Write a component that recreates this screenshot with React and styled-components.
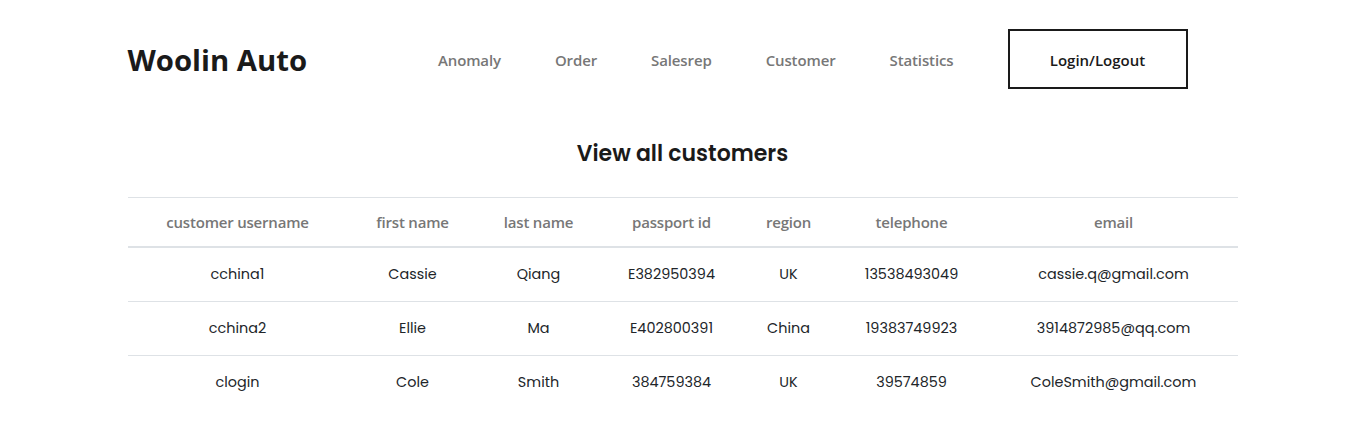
import React from "react";
import styled, { createGlobalStyle } from "styled-components";

const Global = createGlobalStyle`
  html, body { margin: 0; padding: 0; background: #fff; }
  body { font-family: "Open Sans", "Noto Sans", sans-serif; }
`;

const Container = styled.div`
  max-width: 1140px;
  margin: 0 auto;
  padding: 0 15px;
  box-sizing: border-box;
`;

const Header = styled.header`
  display: flex;
  align-items: center;
  height: 60px;
  padding-top: 29px;
`;

const Logo = styled.div`
  font-family: "Open Sans", sans-serif;
  font-weight: 700;
  font-size: 29.3px;
  color: #1a1a1a;
  letter-spacing: 0;
  padding-top: 2px;
`;

const Nav = styled.nav`
  display: flex;
  align-items: center;
  gap: 54px;
  margin-left: auto;
  margin-right: 50px;
`;

const NavLink = styled.a`
  font-family: "Open Sans", sans-serif;
  font-weight: 600;
  font-size: 15px;
  color: #777;
  text-decoration: none;
  letter-spacing: -0.12px;
  padding-top: 2px;
`;

const LoginButton = styled.button`
  width: 180px;
  height: 60px;
  padding: 2px 0 0;
  border: 2px solid #1a1a1a;
  background: #fff;
  font-family: "Open Sans", sans-serif;
  font-weight: 600;
  font-size: 15px;
  color: #1a1a1a;
`;

const Title = styled.h2`
  margin: 0;
  padding-top: 50px;
  text-align: center;
  font-family: "Poppins", "Inter", sans-serif;
  font-weight: 600;
  font-size: 22px;
  line-height: 30px;
  color: #1a1a1a;
`;

const Table = styled.table`
  width: 100%;
  margin-top: 28px;
  border-collapse: collapse;
  table-layout: fixed;
`;

const Th = styled.th`
  height: 48px;
  padding: 0;
  border-top: 1px solid #dee2e6;
  border-bottom: 2px solid #dee2e6;
  font-family: "Open Sans", sans-serif;
  font-weight: 600;
  font-size: 15px;
  color: #777;
  letter-spacing: -0.2px;
  text-align: center;
  vertical-align: middle;
`;

const Td = styled.td`
  height: 53px;
  padding: 0;
  border-top: ${(p) => (p.$first ? "none" : "1px solid #dee2e6")};
  font-family: "Poppins", "Inter", sans-serif;
  font-size: 14.4px;
  color: #212529;
  text-align: center;
  vertical-align: middle;
`;

const columns = [
  ["customer username", 220],
  ["first name", 130],
  ["last name", 122],
  ["passport id", 144],
  ["region", 90],
  ["telephone", 156],
  ["email", 248],
];

const rows = [
  ["cchina1", "Cassie", "Qiang", "E382950394", "UK", "13538493049", "cassie.q@gmail.com"],
  ["cchina2", "Ellie", "Ma", "E402800391", "China", "19383749923", "3914872985@qq.com"],
  ["clogin", "Cole", "Smith", "384759384", "UK", "39574859", "ColeSmith@gmail.com"],
];

export default function App() {
  return (
    <>
      <Global />
      <Container>
        <Header>
          <Logo>Woolin Auto</Logo>
          <Nav>
            <NavLink>Anomaly</NavLink>
            <NavLink>Order</NavLink>
            <NavLink>Salesrep</NavLink>
            <NavLink>Customer</NavLink>
            <NavLink>Statistics</NavLink>
            <LoginButton>Login/Logout</LoginButton>
          </Nav>
        </Header>
        <Title>View all customers</Title>
        <Table>
          <colgroup>
            {columns.map(([n, w]) => (
              <col key={n} style={{ width: w }} />
            ))}
          </colgroup>
          <thead>
            <tr>
              {columns.map(([n]) => (
                <Th key={n}>{n}</Th>
              ))}
            </tr>
          </thead>
          <tbody>
            {rows.map((r, i) => (
              <tr key={i}>
                {r.map((c, j) => (
                  <Td key={j} $first={i === 0}>{c}</Td>
                ))}
              </tr>
            ))}
          </tbody>
        </Table>
      </Container>
    </>
  );
}
